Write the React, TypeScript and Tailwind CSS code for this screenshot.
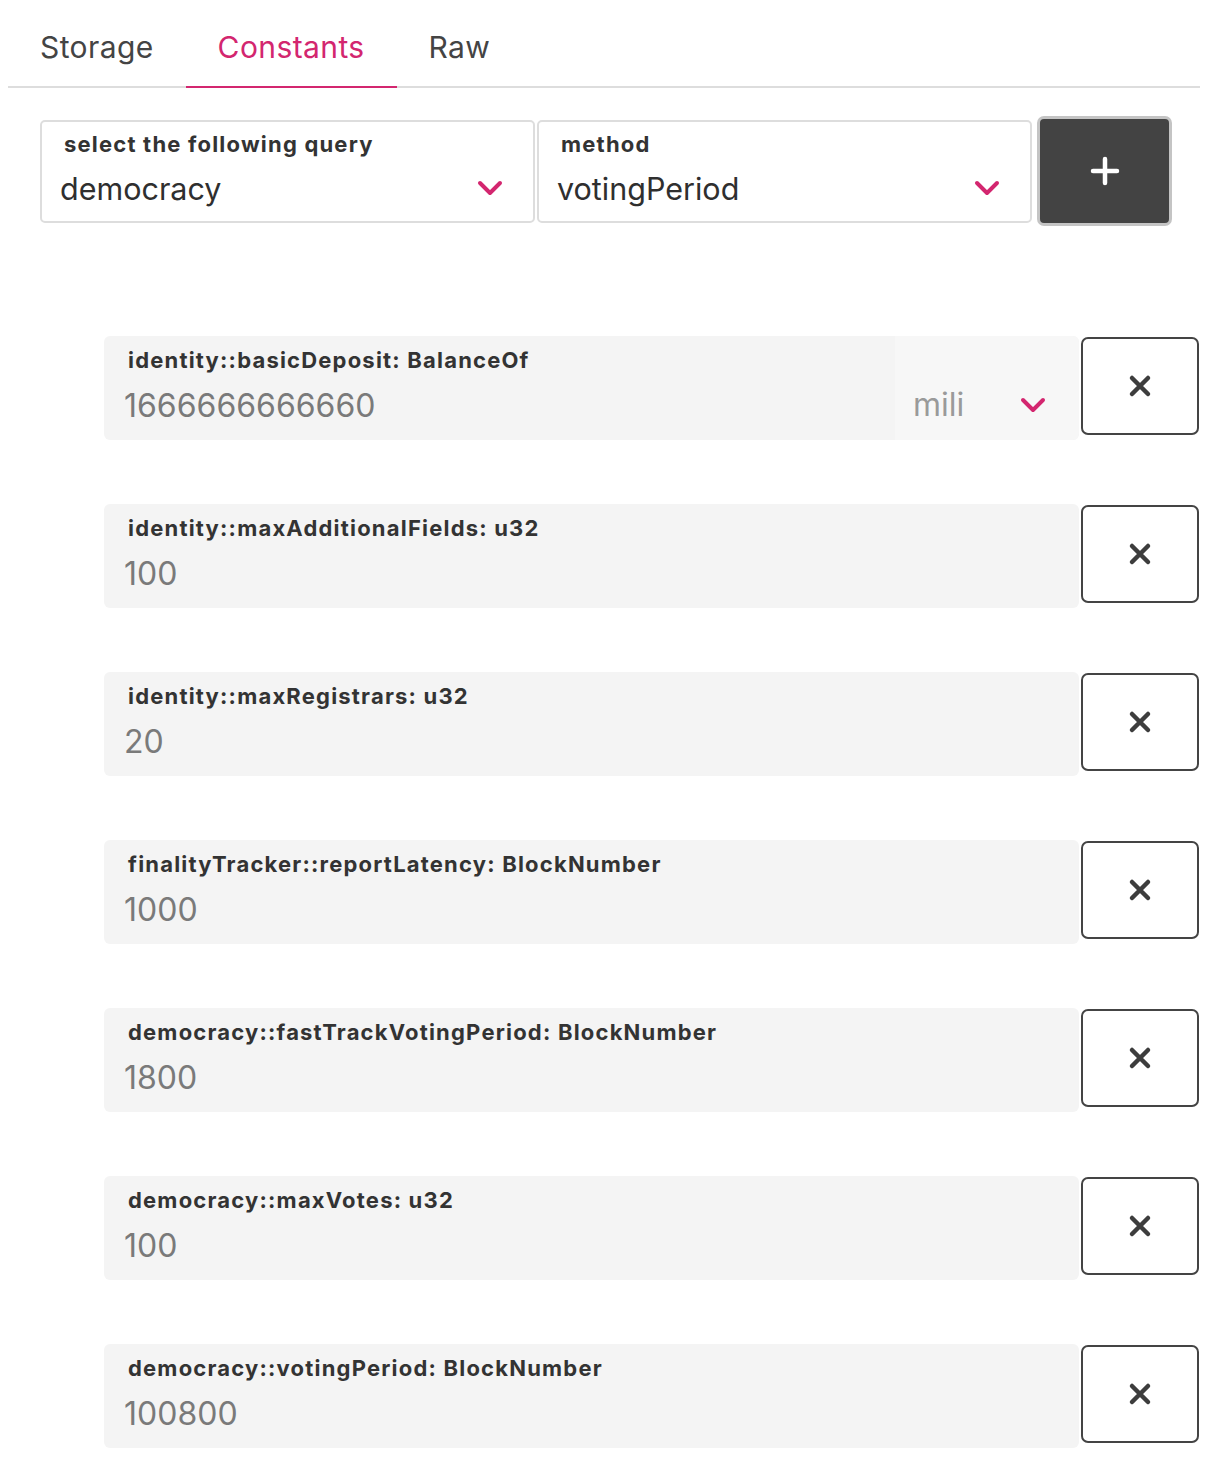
import { FC } from "react";

type Constant = {
  label: string;
  value: string;
  unit?: string;
};

const constants: Constant[] = [
  { label: "identity::basicDeposit: BalanceOf", value: "1666666666660", unit: "mili" },
  { label: "identity::maxAdditionalFields: u32", value: "100" },
  { label: "identity::maxRegistrars: u32", value: "20" },
  { label: "finalityTracker::reportLatency: BlockNumber", value: "1000" },
  { label: "democracy::fastTrackVotingPeriod: BlockNumber", value: "1800" },
  { label: "democracy::maxVotes: u32", value: "100" },
  { label: "democracy::votingPeriod: BlockNumber", value: "100800" },
];

const Chevron: FC<{ className?: string }> = ({ className }) => (
  <svg
    viewBox="0 0 26 16"
    className={className}
    fill="none"
    stroke="#d3266f"
    strokeWidth={4}
    strokeLinecap="round"
    strokeLinejoin="round"
  >
    <path d="M3 3l10 10L23 3" />
  </svg>
);

const Cross = () => (
  <svg viewBox="0 0 24 24" className="w-[24px] h-[24px]" stroke="#3d3d3d" strokeWidth={4.5} strokeLinecap="round">
    <path d="M4 4l16 16M20 4L4 20" />
  </svg>
);

const Dropdown: FC<{ label: string; value: string }> = ({ label, value }) => (
  <div className="relative w-[495px] h-[103px] border-2 border-[#dddddd] rounded-[5px] bg-white">
    <div className="pl-[22px] pt-[8px] text-[22px] leading-[28px] font-bold tracking-[1.2px] text-[#333]">{label}</div>
    <div className="pl-[18px] pt-[11px] text-[30.5px] leading-[40px] text-[#2f2f2f]">{value}</div>
    <Chevron className="absolute right-[30px] top-[58px] w-[26px] h-[16px]" />
  </div>
);

const ConstantRow: FC<Constant> = ({ label, value, unit }) => (
  <div className="flex items-start gap-[2px]">
    <div className="flex w-[975px] h-[104px] bg-[#f4f4f4] rounded-[6px] overflow-hidden">
      <div className="flex-1">
        <div className="pl-[24px] pt-[10px] text-[22px] leading-[28px] font-bold tracking-[1.2px] text-[#333]">{label}</div>
        <div className="pl-[20px] pt-[12px] text-[32px] leading-[40px] text-[#7a7a7a]">{value}</div>
      </div>
      {unit && (
        <div className="relative w-[184px] bg-[#f7f7f7]">
          <div className="pl-[18px] pt-[49px] text-[32px] leading-[40px] text-[#9a9a9a]">{unit}</div>
          <Chevron className="absolute left-[125px] top-[61px] w-[26px] h-[16px]" />
        </div>
      )}
    </div>
    <button className="mt-[1px] w-[118px] h-[98px] border-2 border-[#444] rounded-[7px] bg-white flex items-center justify-center">
      <Cross />
    </button>
  </div>
);

export default function App() {
  return (
    <div className="px-[8px] bg-white min-h-[1480px]" style={{ fontFamily: "Inter, 'Noto Sans', sans-serif" }}>
      <div className="flex mr-[8px] border-b-2 border-[#dddddd]">
        <div className="px-[32px] pt-[27px] pb-[19px] text-[30px] leading-[40px] tracking-[0.4px] text-[#444]">Storage</div>
        <div className="px-[32px] pt-[27px] pb-[19px] text-[30px] leading-[40px] tracking-[0.4px] text-[#d3266f] border-b-2 border-[#d3266f] -mb-[2px]">
          Constants
        </div>
        <div className="px-[32px] pt-[27px] pb-[19px] text-[30px] leading-[40px] tracking-[0.4px] text-[#444]">Raw</div>
      </div>

      <div className="flex items-center pl-[32px] pt-[28px]">
        <Dropdown label="select the following query" value="democracy" />
        <div className="ml-[2px]">
          <Dropdown label="method" value="votingPeriod" />
        </div>
        <button className="ml-[5px] w-[135px] h-[110px] bg-[#434343] border-[3px] border-[#c4c4c4] rounded-[7px] flex items-center justify-center">
          <svg viewBox="0 0 30 30" className="w-[30px] h-[30px]" stroke="#fff" strokeWidth={4.5} strokeLinecap="round">
            <path d="M15 3v24M3 15h24" />
          </svg>
        </button>
      </div>

      <div className="flex flex-col gap-[64px] pl-[96px] pt-[110px] pb-[32px]">
        {constants.map((c, idx) => (
          <ConstantRow key={idx} {...c} />
        ))}
      </div>
    </div>
  );
}
